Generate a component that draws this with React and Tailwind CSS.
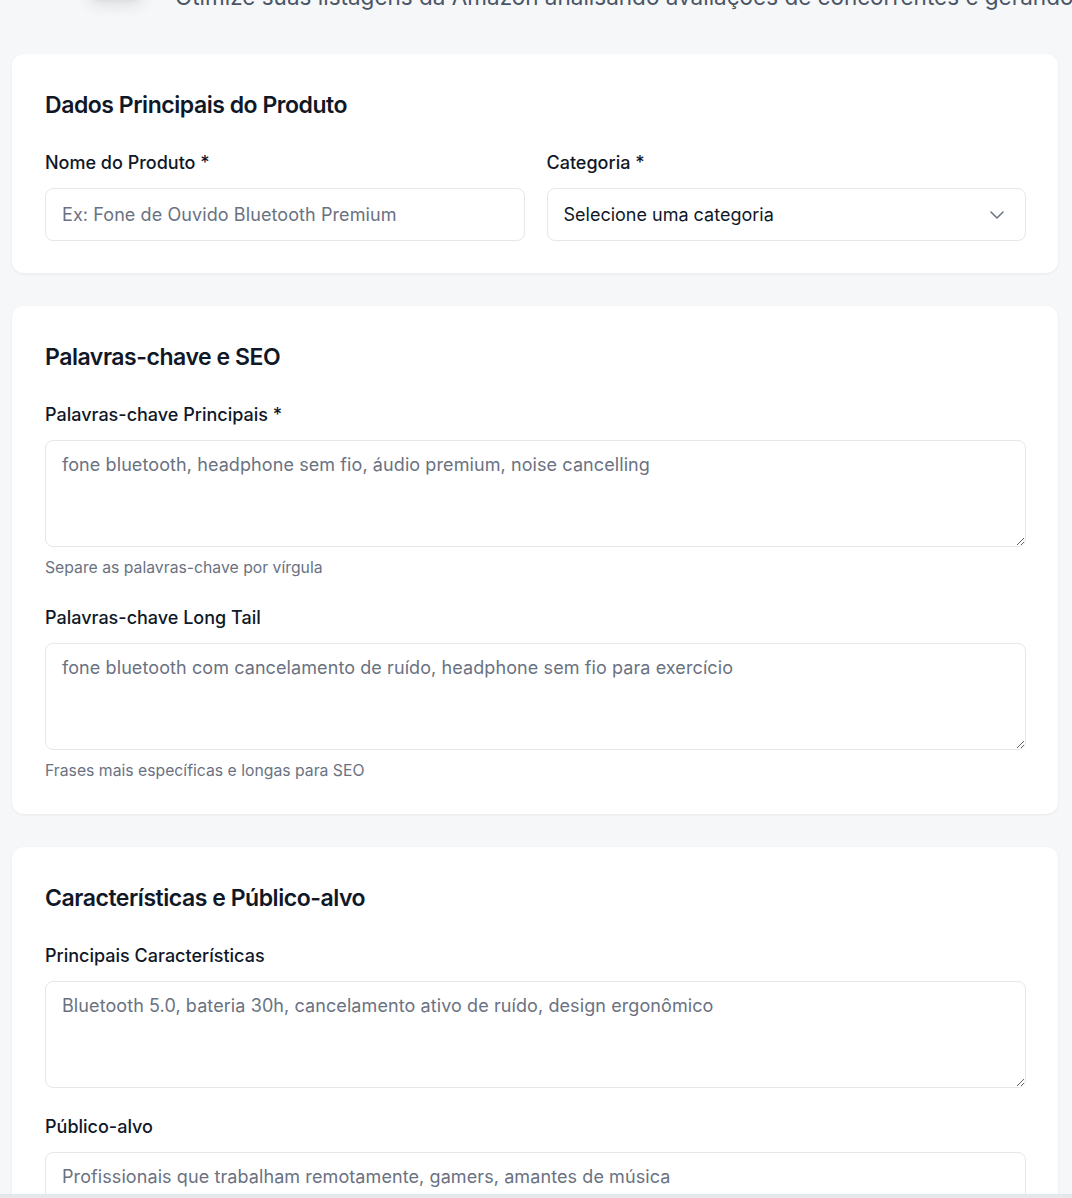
import { ChevronDown } from 'lucide-react'

function Field({ label, children, hint }) {
  return (
    <div>
      <label className="block text-[18px] leading-[26px] font-medium text-gray-900 mb-3">{label}</label>
      {children}
      {hint && <p className="mt-2.5 text-[15.75px] leading-[22px] text-gray-500">{hint}</p>}
    </div>
  )
}

function Area({ placeholder }) {
  return (
    <textarea
      rows={3}
      placeholder={placeholder}
      className="block w-full h-[107px] rounded-lg border border-gray-200 bg-white px-4 pt-2.5 pb-3 text-[18px] leading-[27px] tracking-[0.005em] text-gray-900 placeholder:text-gray-500 outline-none"
    />
  )
}

function Card({ title, children }) {
  return (
    <section className="rounded-xl bg-white shadow-[0_1px_3px_rgba(0,0,0,0.06)] pl-[33px] pr-8 pt-[35px] pb-8">
      <h2 className="text-[23px] leading-8 font-semibold tracking-[-0.02em] text-gray-900 mb-[29px]">{title}</h2>
      {children}
    </section>
  )
}

export default function App() {
  return (
    <div className="min-h-screen bg-[#f6f7f9] font-['Inter',sans-serif] overflow-hidden">
      <div className="flex items-start gap-[27px] pl-[84px] -mt-[66px] h-16">
        <div className="shrink-0 w-16 h-16 rounded-2xl bg-white shadow-lg" />
        <p className="mt-[47px] whitespace-nowrap text-[22.5px] leading-[31px] text-gray-600">Otimize suas listagens da Amazon analisando avaliações de concorrentes e gerando conteúdo otimizado</p>
      </div>

      <div className="ml-3 mr-[14px] mt-14 space-y-[33px]">
        <Card title="Dados Principais do Produto">
          <div className="grid grid-cols-2 gap-[22px]">
            <Field label="Nome do Produto *">
              <input
                placeholder="Ex: Fone de Ouvido Bluetooth Premium"
                className="block w-full h-[53px] rounded-lg border border-gray-200 bg-white px-4 text-[18px] tracking-[0.005em] text-gray-900 placeholder:text-gray-500 outline-none"
              />
            </Field>
            <Field label="Categoria *">
              <div className="flex items-center justify-between h-[53px] rounded-lg border border-gray-200 bg-white pl-4 pr-4 text-[18px] text-gray-900">
                <span>Selecione uma categoria</span>
                <ChevronDown className="w-6 h-6 text-gray-500" strokeWidth={1.5} />
              </div>
            </Field>
          </div>
        </Card>

        <Card title="Palavras-chave e SEO">
          <div className="space-y-[26px]">
            <Field label="Palavras-chave Principais *" hint="Separe as palavras-chave por vírgula">
              <Area placeholder="fone bluetooth, headphone sem fio, áudio premium, noise cancelling" />
            </Field>
            <Field label="Palavras-chave Long Tail" hint="Frases mais específicas e longas para SEO">
              <Area placeholder="fone bluetooth com cancelamento de ruído, headphone sem fio para exercício" />
            </Field>
          </div>
        </Card>

        <Card title="Características e Público-alvo">
          <div className="space-y-[26px]">
            <Field label="Principais Características">
              <Area placeholder="Bluetooth 5.0, bateria 30h, cancelamento ativo de ruído, design ergonômico" />
            </Field>
            <Field label="Público-alvo">
              <Area placeholder="Profissionais que trabalham remotamente, gamers, amantes de música" />
            </Field>
          </div>
        </Card>
      </div>
      <div className="fixed bottom-0 left-0 right-0 h-1 bg-gray-200" />
    </div>
  )
}
